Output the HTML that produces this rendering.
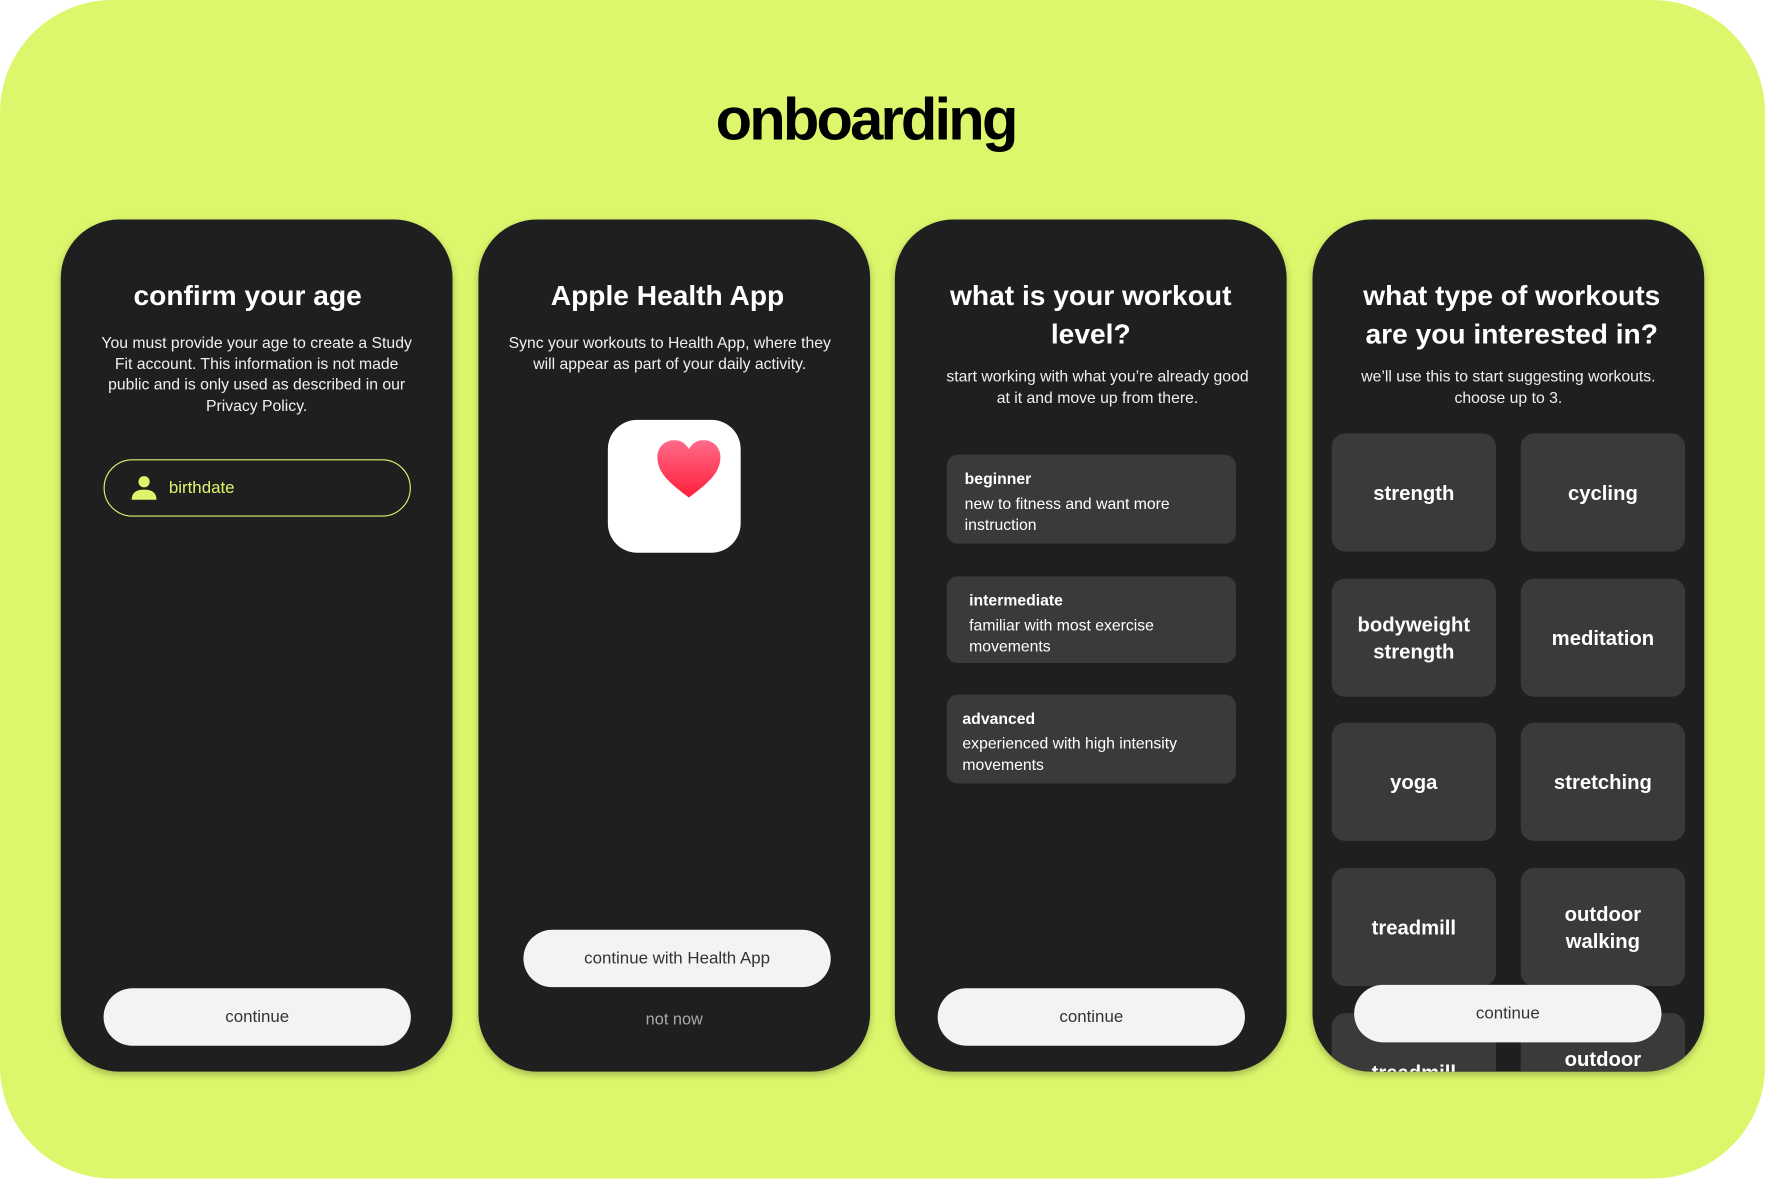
<!DOCTYPE html>
<html><head><meta charset="utf-8"><style>
html,body{margin:0;padding:0;background:#fff;width:1765px;height:1178px;overflow:hidden}
#w{position:absolute;left:0;top:0;width:1568px;height:1047px;transform:scale(1.12564);transform-origin:0 0;font-family:"Liberation Sans",sans-serif}
.bg{position:absolute;left:0;top:0;width:1568px;height:1047px;background:#dcf76c;border-radius:100px}
h1{position:absolute;left:0;width:1538px;top:76px;margin:0;text-align:center;font-size:53px;font-weight:bold;letter-spacing:-2.5px;color:#000}
.card{position:absolute;top:195px;width:348px;height:757px;background:#1f1f1f;border-radius:52px;overflow:hidden;box-shadow:0 3px 6px rgba(0,0,0,.25);color:#fff}
.t{position:absolute;left:0;width:100%;top:51px;text-align:center;font-weight:bold;font-size:25px;line-height:34px}
.p{position:absolute;text-align:center;font-size:14px;line-height:18.7px;color:#f0f0f0}
.btn{position:absolute;width:273px;height:51px;border-radius:26px;background:#f3f3f3;color:#333;font-size:15px;text-align:center;line-height:51px}
.opt{position:absolute;left:46px;width:257px;background:#3a3a3a;border-radius:10px;font-size:14px;line-height:19px;padding:12px 16px;box-sizing:border-box}
.opt b{display:block;margin-bottom:3px}
.tile{position:absolute;width:146px;height:105px;background:#3a3a3a;border-radius:12px;display:flex;align-items:center;justify-content:center;text-align:center;font-weight:bold;font-size:18px;line-height:24px}
</style></head><body><div id="w">
<div class="bg"></div>
<h1>onboarding</h1>

<div class="card" style="left:54px">
<div class="t" style="left:-8px">confirm your age</div>
<div class="p" style="left:32px;width:284px;top:100px">You must provide your age to create a Study Fit account. This information is not made public and is only used as described in our Privacy Policy.</div>
<div style="position:absolute;left:38px;top:213px;width:271px;height:49px;border:1.5px solid #dcf76c;border-radius:26px"></div>
<svg style="position:absolute;left:62px;top:226px" width="24" height="24" viewBox="0 0 24 24"><circle cx="12" cy="7" r="5" fill="#dcf76c"/><path d="M1 23 Q1 14 12 14 Q23 14 23 23 Z" fill="#dcf76c"/></svg>
<div style="position:absolute;left:96px;top:230px;color:#dcf76c;font-size:15px">birthdate</div>
<div class="btn" style="left:38px;top:683px">continue</div>
</div>

<div class="card" style="left:425px">
<div class="t" style="left:-6px">Apple Health App</div>
<div class="p" style="left:16px;width:308px;top:100px">Sync your workouts to Health App, where they will appear as part of your daily activity.</div>
<div style="position:absolute;left:115px;top:178px;width:118px;height:118px;background:#fff;border-radius:26px"></div>
<svg style="position:absolute;left:158px;top:196px" width="58" height="52" viewBox="0 0 58 52"><defs><linearGradient id="g" x1="0" y1="0" x2="0" y2="1"><stop offset="0" stop-color="#ff6a8a"/><stop offset="1" stop-color="#ff1f3a"/></linearGradient></defs><path d="M29 51 C10 37 1 28 1 15 C1 6 8 0 16 0 C22 0 26 3 29 8 C32 3 36 0 42 0 C50 0 57 6 57 15 C57 28 48 37 29 51 Z" fill="url(#g)"/></svg>
<div class="btn" style="left:40px;top:631px">continue with Health App</div>
<div style="position:absolute;left:0;width:348px;top:703px;text-align:center;color:#aaa;font-size:14.5px">not now</div>
</div>

<div class="card" style="left:795px">
<div class="t">what is your workout<br>level?</div>
<div class="p" style="left:40px;width:280px;top:130px">start working with what you’re already good at it and move up from there.</div>
<div class="opt" style="top:209px;height:79px"><b>beginner</b>new to fitness and want more instruction</div>
<div class="opt" style="top:317px;height:77px;padding-left:20px"><b>intermediate</b>familiar with most exercise movements</div>
<div class="opt" style="top:422px;height:79px;padding-left:14px"><b>advanced</b>experienced with high intensity movements</div>
<div class="btn" style="left:38px;top:683px">continue</div>
</div>

<div class="card" style="left:1166px">
<div class="t" style="left:3px">what type of workouts<br>are you interested in?</div>
<div class="p" style="left:26px;width:296px;top:130px">we’ll use this to start suggesting workouts. choose up to 3.</div>
<div class="tile" style="left:17px;top:190px">strength</div>
<div class="tile" style="left:185px;top:190px">cycling</div>
<div class="tile" style="left:17px;top:319px">bodyweight<br>strength</div>
<div class="tile" style="left:185px;top:319px">meditation</div>
<div class="tile" style="left:17px;top:447px">yoga</div>
<div class="tile" style="left:185px;top:447px">stretching</div>
<div class="tile" style="left:17px;top:576px">treadmill</div>
<div class="tile" style="left:185px;top:576px">outdoor<br>walking</div>
<div class="tile" style="left:17px;top:705px">treadmill</div>
<div class="tile" style="left:185px;top:705px">outdoor<br>walking</div>
<div class="btn" style="left:37px;top:680px">continue</div>
</div>
</div></body></html>
